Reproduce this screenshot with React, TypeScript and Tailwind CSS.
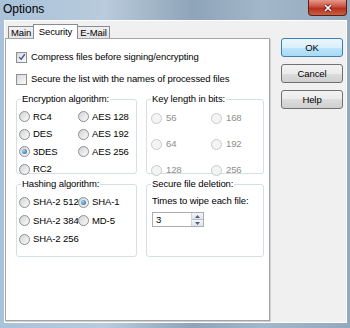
import type { ReactNode } from "react";

type Opt = { label: string; checked?: boolean };

const encryption: Opt[] = [
  { label: "RC4" },
  { label: "DES" },
  { label: "3DES", checked: true },
  { label: "RC2" },
  { label: "AES 128" },
  { label: "AES 192" },
  { label: "AES 256" },
];

const keyLengths = ["56", "64", "128", "168", "192", "256"];

const hashing: Opt[] = [
  { label: "SHA-2 512" },
  { label: "SHA-2 384" },
  { label: "SHA-2 256" },
  { label: "SHA-1", checked: true },
  { label: "MD-5" },
];

function Radio({ checked, disabled }: { checked?: boolean; disabled?: boolean }) {
  return (
    <span
      className={`w-[11px] h-[11px] rounded-full border flex items-center justify-center shrink-0 ${
        disabled
          ? "border-[#c9cacb] bg-[#f4f4f4]"
          : "border-[#8e8f8f] bg-gradient-to-br from-[#d4d4d4] to-[#fafafa]"
      }`}
    >
      {checked && (
        <span className="w-[5px] h-[5px] rounded-full bg-[radial-gradient(circle_at_35%_35%,#9ad6ff,#1d5c9a)]" />
      )}
    </span>
  );
}

function Check({ checked }: { checked?: boolean }) {
  return (
    <span className="w-[11px] h-[11px] border border-[#8e8f8f] bg-gradient-to-br from-[#d8d8d8] to-[#fbfbfb] flex items-center justify-center shrink-0">
      {checked && (
        <svg viewBox="0 0 9 9" className="w-[8px] h-[8px]">
          <path d="M1.3 4.6 L3.6 7 L7.6 1.4" stroke="#3d5595" strokeWidth="1.5" fill="none" />
        </svg>
      )}
    </span>
  );
}

function Group({ title, className, children }: { title: string; className: string; children?: ReactNode }) {
  return (
    <fieldset className={`border border-[#d5dfe5] rounded-[3px] min-w-0 ${className}`}>
      <legend className="ml-[4px] px-[1px] leading-[12px]">{title}</legend>
      {children}
    </fieldset>
  );
}

function Btn({ label, focused }: { label: string; focused?: boolean }) {
  return (
    <button
      className={`w-[62px] h-[19px] rounded-[3px] border leading-none text-black ${
        focused
          ? "border-[#3c7fb1] bg-[linear-gradient(#eaf6fd,#d9f0fc_50%,#bee6fd_50%,#a7d9f5)]"
          : "border-[#707070] bg-[linear-gradient(#f2f2f2,#ebebeb_50%,#dddddd_50%,#cfcfcf)]"
      }`}
    >
      {label}
    </button>
  );
}

export default function App() {
  return (
    <div className="w-[350px] h-[328px] flex flex-col overflow-hidden text-[9.5px] tracking-[-0.1px] text-black font-['Liberation_Sans',Arial,sans-serif] bg-[linear-gradient(90deg,#a9c2da_0%,#b9cbdc_30%,#8ea4b8_55%,#a3b7ca_75%,#93a9bd_100%)]">
      {/* title bar */}
      <div className="h-[20px] flex items-start shrink-0">
        <span className="pl-[3px] pt-[2px] text-[12px] tracking-normal leading-[14px]">Options</span>
        <div className="ml-auto mr-[3px] w-[39px] h-[16px] rounded-b-[4px] border border-t-0 border-[#5b1f19] bg-[linear-gradient(#e39a8a,#cd4d3e_45%,#b3301f_55%,#c9603f)] flex items-center justify-center">
          <svg viewBox="0 0 10 8" className="w-[10px] h-[8px]">
            <path d="M2 1 L8 7 M8 1 L2 7" stroke="#5a1a14" strokeWidth="3" />
            <path d="M2 1 L8 7 M8 1 L2 7" stroke="#ffffff" strokeWidth="1.6" />
          </svg>
        </div>
      </div>

      {/* client area */}
      <div className="ml-[4px] mr-[3px] mb-[5px] h-[303px] border border-white bg-[#f0f0f0] flex">
        <div className="w-[265px] flex flex-col pt-[3px]">
          {/* tabs */}
          <div className="h-[15px] -mb-[1px] pl-[3px] flex items-end relative z-10">
            <div className="w-[26px] h-[12px] mb-[1px] border border-b-0 border-[#898c95] bg-[linear-gradient(#f2f2f2,#e3e3e3)] flex items-center justify-center leading-none">
              Main
            </div>
            <div className="-ml-[1px] w-[45px] h-[15px] border border-b-0 border-[#898c95] bg-white flex items-center justify-center leading-none">
              Security
            </div>
            <div className="-ml-[1px] w-[33px] h-[12px] mb-[1px] border border-b-0 border-[#898c95] bg-[linear-gradient(#f2f2f2,#e3e3e3)] flex items-center justify-center leading-none">
              E-Mail
            </div>
          </div>

          {/* panel */}
          <div className="h-[283px] border border-[#a3a5ab] bg-white pt-[7px] pl-[10px] shadow-[1px_1px_0_#cfcfcf]">
            <div className="h-[22px] flex items-center gap-[4px]">
              <Check checked />
              <span>Compress files before signing/encrypting</span>
            </div>
            <div className="h-[22px] flex items-center gap-[4px]">
              <Check />
              <span>Secure the list with the names of processed files</span>
            </div>

            <div className="mt-[3px] grid grid-cols-[121px_118px] gap-x-[9px] gap-y-[4px]">
              <Group title="Encryption algorithm:" className="h-[81px]">
                <div className="pt-[3px] pl-[2px] grid grid-cols-[59px_1fr] grid-rows-[repeat(4,17.5px)] grid-flow-col">
                  {encryption.map((o) => (
                    <div key={o.label} className="flex items-center gap-[3px]">
                      <Radio checked={o.checked} />
                      <span>{o.label}</span>
                    </div>
                  ))}
                </div>
              </Group>

              <Group title="Key length in bits:" className="h-[81px]">
                <div className="pl-[4px] grid grid-cols-[60px_1fr] grid-rows-[repeat(3,26px)] grid-flow-col">
                  {keyLengths.map((k) => (
                    <div key={k} className="flex items-center gap-[4px] text-[#8d8d8d]">
                      <Radio disabled />
                      <span>{k}</span>
                    </div>
                  ))}
                </div>
              </Group>

              <Group title="Hashing algorithm:" className="h-[79px]">
                <div className="pt-[3px] pl-[2px] grid grid-cols-[59px_1fr] grid-rows-[repeat(3,18.5px)] grid-flow-col">
                  {hashing.map((o) => (
                    <div key={o.label} className="flex items-center gap-[3px] whitespace-nowrap">
                      <Radio checked={o.checked} />
                      <span>{o.label}</span>
                    </div>
                  ))}
                </div>
              </Group>

              <Group title="Secure file deletion:" className="h-[79px]">
                <div className="pl-[5px] mt-[5px] leading-[12px]">Times to wipe each file:</div>
                <div className="ml-[5px] mt-[5px] w-[52px] h-[15px] border border-[#abadb3] bg-white flex">
                  <span className="flex-1 pl-[3px] leading-[13px]">3</span>
                  <div className="w-[12px] flex flex-col border-l border-[#d0d3d8]">
                    <div className="flex-1 bg-[linear-gradient(#f4f6f9,#dde4ec)] border-b border-[#b5bcc6] flex items-center justify-center">
                      <svg viewBox="0 0 5 3" className="w-[5px] h-[3px]">
                        <path d="M0 3 L2.5 0 L5 3 Z" fill="#4d6185" />
                      </svg>
                    </div>
                    <div className="flex-1 bg-[linear-gradient(#f4f6f9,#dde4ec)] flex items-center justify-center">
                      <svg viewBox="0 0 5 3" className="w-[5px] h-[3px]">
                        <path d="M0 0 L5 0 L2.5 3 Z" fill="#4d6185" />
                      </svg>
                    </div>
                  </div>
                </div>
              </Group>
            </div>
          </div>
        </div>

        {/* buttons */}
        <div className="ml-[11px] pt-[17px] flex flex-col gap-[7px]">
          <Btn label="OK" focused />
          <Btn label="Cancel" />
          <Btn label="Help" />
        </div>
      </div>
    </div>
  );
}
